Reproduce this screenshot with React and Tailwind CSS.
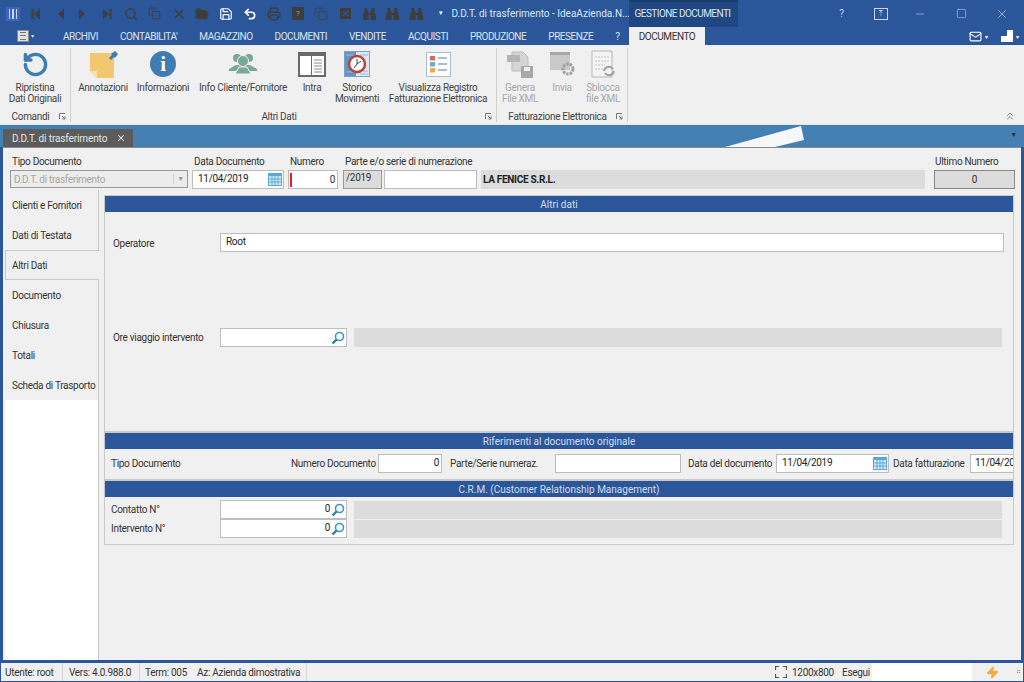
import React from 'react';
import { Search, X, Save, Undo2, Printer, Copy, FolderOpen, Minus, Square, ChevronsUp, Mail, Zap, RotateCcw } from 'lucide-react';

const menus = ['ARCHIVI', "CONTABILITA'", 'MAGAZZINO', 'DOCUMENTI', 'VENDITE', 'ACQUISTI', 'PRODUZIONE', 'PRESENZE', '?'];
const sideItems = ['Clienti e Fornitori', 'Dati di Testata', 'Altri Dati', 'Documento', 'Chiusura', 'Totali', 'Scheda di Trasporto'];

const Tool = ({ children }) => (
  <div className="w-[23.8px] h-[16px] flex items-center justify-center text-[#3d3d3d]">{children}</div>
);

const Skip = ({ flip, bar }) => (
  <svg width="12" height="14" viewBox="0 0 12 14" style={flip ? { transform: 'scaleX(-1)' } : undefined}>
    {bar && <rect x="1.5" y="2" width="2" height="10" fill="#3d3d3d" />}
    <path d="M10 1.5v11L4 7z" fill="#3d3d3d" />
  </svg>
);

const Binoculars = () => (
  <svg width="15" height="14" viewBox="0 0 15 14" fill="#3d3d3d">
    <path d="M2.5 1h3v3h1v2h2V4h1V1h3v3l1.500 5v4h-5.500V8h-2v5H1V9l1.500-5z" />
  </svg>
);

const Expander = () => (
  <svg width="7" height="7" viewBox="0 0 7 7" fill="none" stroke="#777">
    <path d="M.5 6V.5H6" />
    <path d="M3 3l3 3M6 3.500V6H3.500" />
  </svg>
);

const Calendar = () => (
  <svg width="14" height="13" viewBox="0 0 14 13">
    <rect width="14" height="13" fill="#5ba7d6" />
    <path d="M1 3h12v9H1z" fill="#d8ecf8" />
    <path d="M4 3v9M7 3v9M10 3v9M1 6h12M1 9h12" stroke="#5ba7d6" strokeWidth="1" />
  </svg>
);

const Lens = () => (
  <svg width="14" height="14" viewBox="0 0 14 14" fill="none">
    <circle cx="8.500" cy="5.500" r="4" stroke="#3b97c4" strokeWidth="1.600" />
    <path d="M5.500 8.500L1.500 12.500" stroke="#2b7fae" strokeWidth="2.400" />
  </svg>
);

const RibbonButton = ({ w, icon, lines, disabled }) => (
  <div className={`${w} h-[62px] flex flex-col items-center shrink-0`}>
    <div className="h-[32px] flex items-center justify-center">{icon}</div>
    <div className={`mt-[2px] text-center leading-[11px] whitespace-nowrap ${disabled ? 'text-[#a8a8a8]' : 'text-[#444]'}`}>
      {lines.map(l => <div key={l}>{l}</div>)}
    </div>
  </div>
);

const RibbonGroup = ({ w, label, children, pl }) => (
  <div className={`${w} ${pl} h-[74px] shrink-0 flex flex-col border-r border-[#d0d0d0]`}>
    <div className="flex h-[62px]">{children}</div>
    <div className="flex items-center h-[12px] text-[#444] whitespace-nowrap">
      <div className="flex-1 text-center">{label}</div>
      <div className="w-[10px] mr-[1px] flex"><Expander /></div>
    </div>
  </div>
);

const SectionHeader = ({ title }) => (
  <div className="h-[16px] bg-[#2b579a] text-[#d5deec] text-center leading-[17px] tracking-normal">{title}</div>
);

const Box = ({ w, h = 'h-[19px]', right, children, icon, bg = 'bg-white' }) => (
  <div className={`${w} ${h} ${bg} border border-[#bdbdbd] flex items-center shrink-0 pl-[5px] pr-[1px] text-[#222]`}>
    <span className={`flex-1 overflow-hidden whitespace-nowrap pb-[2px] ${right ? 'text-right pr-px' : ''}`}>{children}</span>
    {icon}
  </div>
);

export default function App() {
  return (
    <div className="w-[1024px] h-[682px] overflow-hidden bg-[#2b579a] relative text-[10px] tracking-[-0.3px] font-['Roboto',sans-serif]">
      {/* title row */}
      <div className="h-[27px] flex items-center">
        <div className="w-[14px] h-[14px] ml-[6px] mr-[4px] bg-[#3a62c9] flex items-center justify-center gap-[2px]">
          <div className="w-px h-[10px] bg-[#cfd8f5]" /><div className="w-[2px] h-[10px] bg-[#cfd8f5]" /><div className="w-px h-[10px] bg-[#cfd8f5]" />
        </div>
        <div className="flex items-center">
          <Tool><Skip bar /></Tool>
          <Tool><Skip /></Tool>
          <Tool><Skip flip /></Tool>
          <Tool><Skip flip bar /></Tool>
          <Tool><Search size={14} strokeWidth={2.200} /></Tool>
          <Tool><Copy size={13} strokeWidth={1.800} /></Tool>
          <Tool><X size={14} strokeWidth={3} /></Tool>
          <Tool><FolderOpen size={14} fill="#3d3d3d" /></Tool>
          <Tool><Save size={14} color="#fff" strokeWidth={2} /></Tool>
          <Tool><Undo2 size={14} color="#fff" strokeWidth={2.800} /></Tool>
          <Tool><Printer size={14} strokeWidth={2.400} /></Tool>
          <Tool><div className="w-[12px] h-[13px] bg-[#3d3d3d] text-[#9a9a9a] text-[8px] leading-[13px] text-center">?</div></Tool>
          <Tool><Copy size={14} strokeWidth={1.400} /></Tool>
          <Tool><div className="w-[11px] h-[11px] bg-[#3d3d3d] text-[#2b579a] flex items-center justify-center"><X size={9} strokeWidth={3} /></div></Tool>
          <Tool><Binoculars /></Tool>
          <Tool><Binoculars /></Tool>
          <Tool><Binoculars /></Tool>
        </div>
        <span className="ml-[10px] w-[8px] text-[7px] text-white">▾</span>
        <span className="ml-[5px] w-[177px] text-[#dde5f2] whitespace-nowrap overflow-hidden tracking-normal">D.D.T. di trasferimento - IdeaAzienda.N...</span>
        <div className="h-[27px] w-[109px] bg-[#1f4781] border-t-2 border-[#1a3c6f] text-[#dde5f2] flex items-center pl-[6px] pb-[3px] whitespace-nowrap tracking-[-0.55px]">GESTIONE DOCUMENTI</div>
        <div className="flex-1 flex items-center text-[#c9d5e8]">
          <span className="ml-[99px] w-[10px] text-center">?</span>
          <div className="ml-[27px] w-[14px] h-[12px] border border-[#c9d5e8] flex items-center justify-center text-[8px] leading-none">⤒</div>
          <Minus size={12} className="ml-[26px]" strokeWidth={1.200} />
          <Square size={11} className="ml-[30px]" strokeWidth={1.200} />
          <X size={14} className="ml-[28px]" strokeWidth={1.200} />
        </div>
      </div>

      {/* menu row */}
      <div className="h-[18px] flex items-end text-[#dde5f2]">
        <div className="w-[12px] h-[12px] ml-[17px] mb-[3px] bg-[#e2e2e2] border border-[#8a8a8a] flex flex-col justify-around px-[2px]">
          <div className="h-px bg-[#777]" /><div className="h-px bg-[#777]" /><div className="h-px bg-[#777]" />
        </div>
        <span className="ml-[2px] mb-[6px] w-[5px] text-[6px] leading-none">▾</span>
        <div className="ml-[27px] flex gap-[22px] h-[18px] items-center w-[566px] whitespace-nowrap tracking-[-0.45px]">
          {menus.map(m => <span key={m}>{m}</span>)}
        </div>
        <div className="w-[76px] h-[18px] bg-[#f0f0f0] text-[#333] flex items-center justify-center tracking-[-0.45px]">DOCUMENTO</div>
        <div className="flex-1 flex items-center justify-end h-[18px] pr-[5px]">
          <Mail size={13} color="#fff" />
          <span className="ml-[3px] text-[6px] text-white">▾</span>
          <div className="ml-[14px] w-[12px] h-[12px] bg-white flex"><div className="w-[6px] h-[6px] bg-[#2b579a]" /></div>
          <span className="ml-[3px] text-[6px] text-white">▾</span>
        </div>
      </div>

      {/* ribbon */}
      <div className="h-[79px] bg-[#f0f0f0] flex items-start pt-[3px] pl-[2px]">
        <RibbonGroup w="w-[69px]" label="Comandi">
          <RibbonButton w="w-[66px]" lines={['Ripristina', 'Dati Originali']} icon={<RotateCcw size={27} color="#3f7cb1" strokeWidth={3} />} />
        </RibbonGroup>
        <RibbonGroup w="w-[426px]" pl="pl-[2px]" label="Altri Dati">
          <RibbonButton w="w-[60px]" lines={['Annotazioni']} icon={
            <svg width="30" height="28" viewBox="0 0 30 28">
              <path d="M2 3h24v25H9l-7-7z" fill="#f3c76f" />
              <path d="M2 21h7v7z" fill="#fbe3ae" />
              <path d="M21 8l3-3-1-1 4-3 3 3-3 4-1-1-3 3z" fill="#3f7cb1" />
            </svg>} />
          <RibbonButton w="w-[60px]" lines={['Informazioni']} icon={<div className="w-[26px] h-[26px] rounded-full bg-[#3f7cb1] flex items-center justify-center text-white"><span className="font-bold text-[21px] leading-none font-['Liberation_Serif',serif]">i</span></div>} />
          <RibbonButton w="w-[100px]" lines={['Info Cliente/Fornitore']} icon={
            <svg width="28" height="24" viewBox="0 0 28 24" fill="#79a994">
              <circle cx="8" cy="6" r="4" /><circle cx="20" cy="6" r="4" />
              <path d="M0 17l7-4h14l7 4v2H0z" />
              <circle cx="14" cy="9" r="5.500" stroke="#f0f0f0" strokeWidth="1" />
              <path d="M6 22l4-7h8l4 7z" stroke="#f0f0f0" strokeWidth="1" />
            </svg>} />
          <RibbonButton w="w-[38px]" lines={['Intra']} icon={
            <svg width="28" height="25" viewBox="0 0 28 25">
              <rect width="28" height="25" fill="#6a6a6a" />
              <rect x="2" y="4" width="11" height="19" fill="#fff" />
              <rect x="14" y="4" width="12" height="19" fill="#fff" />
              <path d="M16 8h8M16 11h8M16 14h8M16 17h8M16 20h8" stroke="#8a8a8a" />
            </svg>} />
          <RibbonButton w="w-[52px]" lines={['Storico', 'Movimenti']} icon={
            <svg width="26" height="26" viewBox="0 0 26 26">
              <rect x=".5" y=".5" width="25" height="25" fill="#dbe7f3" stroke="#7fa0c4" />
              <rect x="1" y="1" width="11" height="24" fill="#5f95c8" />
              <path d="M16 4h8M16 20h8M16 23h8M2 4h8M2 21h8" stroke="#9db9d6" />
              <circle cx="13" cy="13" r="8" fill="#fff" stroke="#b5453a" strokeWidth="2.500" />
              <path d="M13 8v5l4-3M13 13l-3 4" stroke="#444" fill="none" />
            </svg>} />
          <RibbonButton w="w-[110px]" lines={['Visualizza Registro', 'Fatturazione Elettronica']} icon={
            <svg width="25" height="25" viewBox="0 0 25 25">
              <rect x=".5" y=".5" width="24" height="24" fill="#fff" stroke="#a9bbd5" />
              <rect x="4" y="4" width="5" height="4.500" fill="#d9685a" />
              <rect x="4" y="10" width="5" height="4.500" fill="#6ea7da" />
              <rect x="4" y="16" width="5" height="4.500" fill="#eda94e" />
              <path d="M12 6h9M12 12h9M12 18h9" stroke="#5878a5" />
            </svg>} />
        </RibbonGroup>
        <RibbonGroup w="w-[131px]" pl="pl-[2px]" label="Fatturazione Elettronica">
          <RibbonButton disabled w="w-[42px]" lines={['Genera', 'File XML']} icon={
            <svg width="26" height="27" viewBox="0 0 26 27">
              <path d="M5 1h11l5 5v14H5z" fill="#d5d5d5" stroke="#bbb" />
              <rect y="4" width="13" height="7" fill="#b5b5b5" />
              <rect x="14" y="15" width="12" height="12" fill="#a8a8a8" />
              <rect x="17" y="16" width="6" height="4" fill="#eee" />
            </svg>} />
          <RibbonButton disabled w="w-[42px]" lines={['Invia']} icon={
            <svg width="25" height="24" viewBox="0 0 25 24">
              <rect width="20" height="18" fill="#c9c9c9" />
              <rect width="20" height="3" fill="#a8a8a8" />
              <circle cx="18" cy="17" r="5" fill="none" stroke="#a0a0a0" strokeWidth="3" strokeDasharray="2.500 1" />
            </svg>} />
          <RibbonButton disabled w="w-[40px]" lines={['Sblocca', 'file XML']} icon={
            <svg width="25" height="28" viewBox="0 0 25 28" fill="none">
              <path d="M1 1h20v26H1z" stroke="#b5b5b5" fill="#f4f4f4" />
              <path d="M4 7h14M4 11h14M4 15h10M4 19h8" stroke="#c5c5c5" strokeDasharray="2 1" />
              <path d="M13 21a5 5 0 0 1 9-2M23 21a5 5 0 0 1-9 2" stroke="#a0a0a0" strokeWidth="2" />
            </svg>} />
        </RibbonGroup>
        <div className="flex-1 h-[74px] flex items-end justify-end pr-[8px] text-[#8a8a8a]"><ChevronsUp size={12} /></div>
      </div>

      {/* document tab strip */}
      <div className="h-[23px] bg-[#4580b4] border-t border-[#dfe6ee] relative flex items-end pl-[3px] pr-[7px] justify-between">
        <div className="w-[130px] h-[18px] bg-[#5c5c5c] text-[#e6e6e6] flex items-center pl-[9px] gap-[9px] whitespace-nowrap tracking-[-0.12px]">
          D.D.T. di trasferimento <X size={10} strokeWidth={2.500} />
        </div>
        <span className="text-[7px] leading-none text-[#333] mb-[8px]">▼</span>
        {/* bright wedge over the strip */}
        <svg className="absolute left-[725px] top-0" width="81" height="22" viewBox="0 0 81 22"><path d="M0 22L76 1l3 14-29 7z" fill="#f5f7f9" /></svg>
      </div>

      {/* document body */}
      <div className="mx-[3px] h-[513px] bg-[#f0f0f0] border-t border-[#8a8a8a] flex flex-col text-[#333]">
        <div className="h-[42px] shrink-0 flex pl-[7px] pt-[7px] whitespace-nowrap">
          <div className="w-[182px]">
            <div className="h-[15px] leading-[13px] pl-[2px]">Tipo Documento</div>
            <div className="w-[178px] h-[18px] border border-[#9a9a9a] bg-[#ececec] flex items-center pl-[3px] text-[#a5a5a5]">
              <span className="flex-1">D.D.T. di trasferimento</span>
              <span className="w-[14px] border-l border-[#ccc] text-center text-[7px] text-[#999]">▼</span>
            </div>
          </div>
          <div className="w-[96px]">
            <div className="h-[15px] leading-[13px] pl-[2px]">Data Documento</div>
            <Box w="w-[92px]" icon={<Calendar />} >11/04/2019</Box>
          </div>
          <div className="w-[55px]">
            <div className="h-[15px] leading-[13px] pl-[2px]">Numero</div>
            <div className="w-[50px] h-[19px] bg-white border border-[#bdbdbd] flex items-center pr-[2px]">
              <div className="w-[2px] h-[14px] bg-[#e02020] ml-px" />
              <span className="flex-1 text-right pb-[1px]">0</span>
            </div>
          </div>
          <div className="w-[138px]">
            <div className="h-[15px] leading-[13px] pl-[2px]">Parte e/o serie di numerazione</div>
            <div className="flex gap-[2px]">
              <div className="w-[39px] h-[19px] bg-[#dcdcdc] border border-[#9a9a9a] pl-[2px] leading-[14px]">/2019</div>
              <Box w="w-[93px]" />
            </div>
          </div>
          <div className="w-[444px] h-[19px] mt-[15px] bg-[#dcdcdc] font-bold text-[#222] pl-[2px] leading-[19px]">LA FENICE S.R.L.</div>
          <div className="ml-[9px] w-[81px]">
            <div className="h-[15px] leading-[13px] pl-[1px]">Ultimo Numero</div>
            <div className="h-[19px] bg-[#dcdcdc] border border-[#8a8a8a] text-center leading-[17px]">0</div>
          </div>
        </div>

        <div className="flex-1 flex min-h-0 pl-[2px] pr-[1px] whitespace-nowrap">
          {/* side tabs */}
          <div className="w-[94px] bg-white shrink-0 border-r border-[#c8c8c8] flex flex-col">
            {sideItems.map(s => (
              <div key={s} className={`h-[30px] shrink-0 flex items-center bg-[#f0f0f0] ${s === 'Altri Dati' ? 'pl-[6px] border-y border-l border-[#c8c8c8] -mr-px relative' : 'pl-[7px]'}`}>{s}</div>
            ))}
          </div>

          {/* forms */}
          <div className="flex-1 pl-[5px] pr-[6px] pt-[5px] flex flex-col">
            <div className="h-[237px] border border-[#c8c8c8] shrink-0">
              <SectionHeader title="Altri dati" />
              <div className="flex items-center h-[19px] mt-[21px] pl-[8px]">
                <div className="w-[107px] pt-[1px]">Operatore</div>
                <Box w="w-[784px]">Root</Box>
              </div>
              <div className="flex items-center h-[19px] mt-[76px] pl-[8px]">
                <div className="w-[107px]">Ore viaggio intervento</div>
                <Box w="w-[127px]" icon={<Lens />} />
                <div className="ml-[7px] w-[648px] h-[19px] bg-[#dcdcdc]" />
              </div>
            </div>
            <div className="h-[48px] border border-[#c8c8c8] shrink-0 overflow-hidden">
              <SectionHeader title="Riferimenti al documento originale" />
              <div className="flex items-center h-[29px] pl-[6px]">
                <div className="w-[180px]">Tipo Documento</div>
                <div className="w-[87px]">Numero Documento</div>
                <Box w="w-[64px]" right>0</Box>
                <div className="ml-[8px] w-[105px]">Parte/Serie numeraz.</div>
                <Box w="w-[126px]" />
                <div className="ml-[7px] w-[88px]">Data del documento</div>
                <Box w="w-[113px]" icon={<Calendar />}>11/04/2019</Box>
                <div className="ml-[4px] w-[77px]">Data fatturazione</div>
                <div className="w-[43px] h-[19px] bg-white border border-[#bdbdbd] border-r-0 pl-[4px] leading-[15px] overflow-hidden text-[#222]">11/04/2019</div>
              </div>
            </div>
            <div className="h-[65px] border border-[#c8c8c8] shrink-0">
              <SectionHeader title="C.R.M. (Customer Relationship Management)" />
              <div className="pt-[3px] pl-[6px]">
                {['Contatto N°', 'Intervento N°'].map(l => (
                  <div key={l} className="flex items-center h-[19px]">
                    <div className="w-[109px]">{l}</div>
                    <Box w="w-[127px]" right icon={<Lens />}>0</Box>
                    <div className="ml-[7px] w-[648px] h-[18px] bg-[#dcdcdc]" />
                  </div>
                ))}
              </div>
            </div>
          </div>
        </div>
      </div>

      {/* status bar */}
      <div className="mt-[3px] mx-px h-[18px] bg-[#f0f0f0] flex items-center text-[#333] whitespace-nowrap">
        <div className="w-[62px] pl-[4px] border-r border-[#d5d5d5] h-full leading-[19px]">Utente: root</div>
        <div className="w-[77px] pl-[6px] border-r border-[#d5d5d5] h-full leading-[19px]">Vers: 4.0.988.0</div>
        <div className="w-[167px] pl-[5px] border-r border-[#d5d5d5] h-full leading-[19px] flex gap-[10px]"><span>Term: 005</span><span>Az: Azienda dimostrativa</span></div>
        <div className="flex-1" />
        <svg width="12" height="12" viewBox="0 0 12 12" fill="none" stroke="#555" strokeWidth="1.200"><path d="M.5 4V.5H4M8 .5h3.500V4M11.500 8v3.500H8M4 11.500H.5V8" /></svg>
        <span className="ml-[5px] w-[50px]">1200x800</span>
        <span className="w-[30px]">Esegui</span>
        <div className="w-[100px] h-full bg-white" />
        <div className="w-[37px] flex justify-center pl-[3px]"><Zap size={13} color="#f0ad3c" fill="#f0ad3c" /></div>
        <div className="w-[14px] text-[#888] text-[7px] text-right pr-[2px]">⠶</div>
      </div>
    </div>
  );
}
